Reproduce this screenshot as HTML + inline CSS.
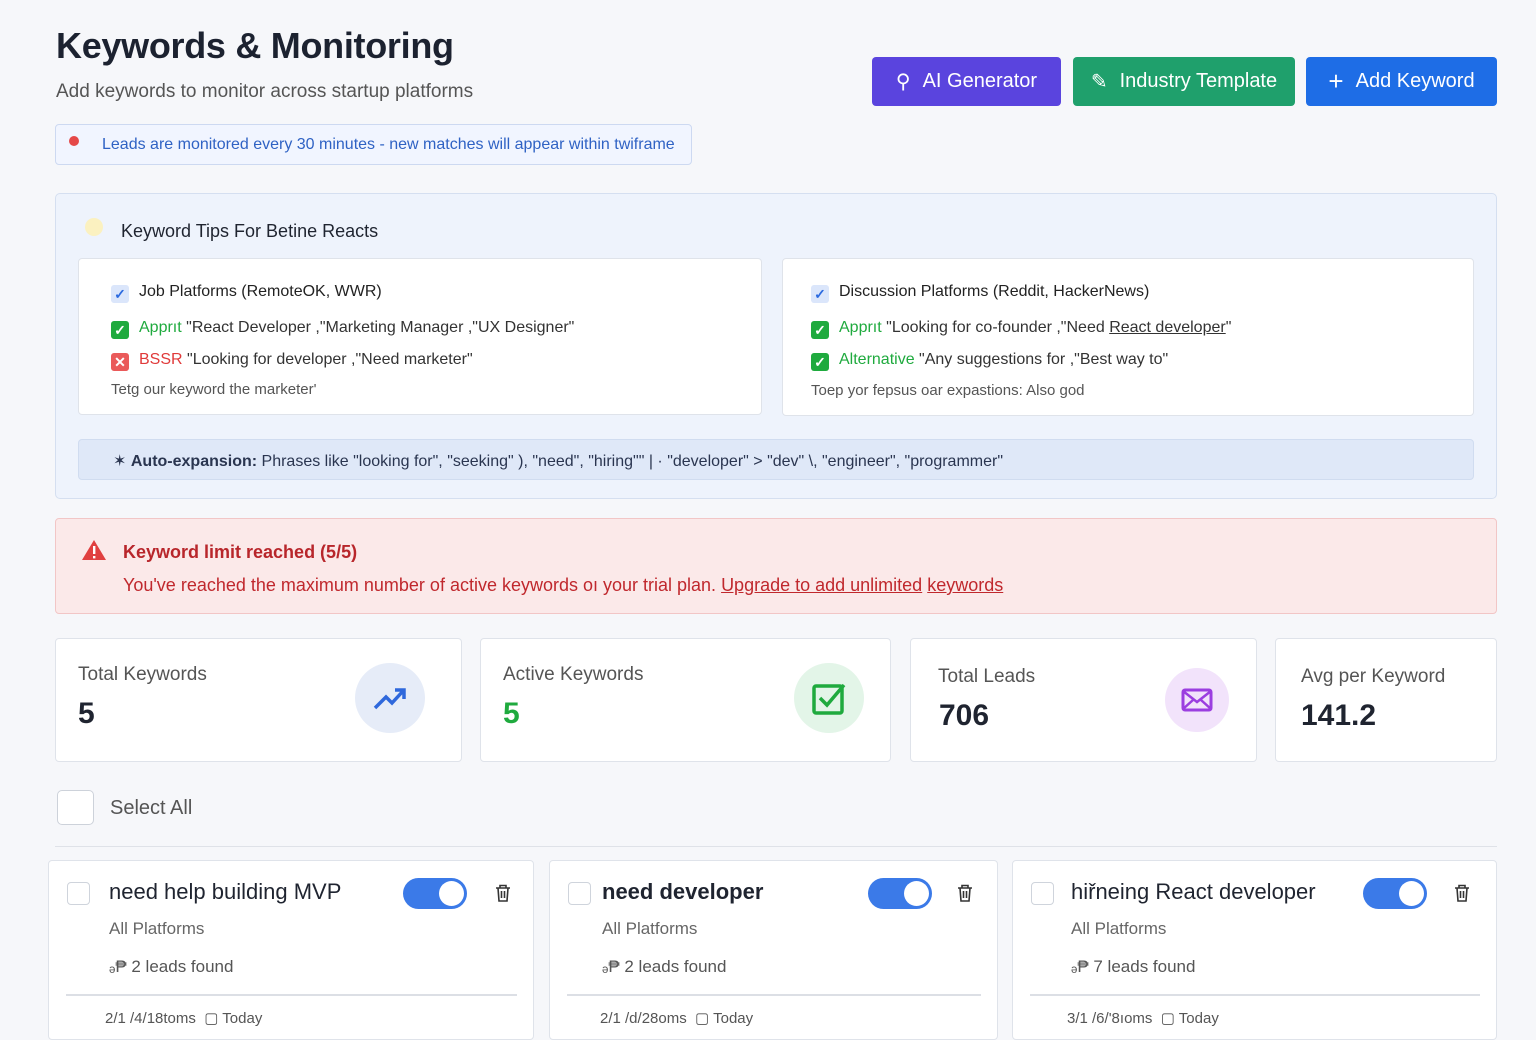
<!DOCTYPE html><html><head><style>
*{box-sizing:border-box;margin:0;padding:0}
body{width:1536px;height:1024px;overflow:hidden;background:#f6f7fa;font-family:"Liberation Sans",sans-serif;color:#1f2430;position:relative}
.a{position:absolute}
.btn{position:absolute;top:57px;height:49px;border-radius:4px;color:#fff;font-size:20px;display:flex;align-items:center;justify-content:center;gap:12px}
.card{position:absolute;background:#fff;border:1px solid #dfe3ea;border-radius:4px}
.chk{display:inline-block;width:18px;height:18px;border-radius:3px;vertical-align:-3px;margin-right:10px;color:#fff;font-size:14px;text-align:center;line-height:18px;font-weight:bold}
.row{position:absolute;left:32px;font-size:16px;color:#333}
.stat .l{position:absolute;left:22px;top:25px;font-size:19px;color:#555}
.stat .v{position:absolute;left:22px;top:58px;font-size:30px;font-weight:bold}
.circ{position:absolute;border-radius:50%;display:flex;align-items:center;justify-content:center}
.kc .cb{position:absolute;left:18px;top:21px;width:23px;height:23px;border:1.5px solid #cfd4dc;border-radius:4px}
.kc .t{position:absolute;top:18px;font-size:22px}
.kc .p{position:absolute;top:58px;font-size:17px;color:#666}
.kc .f{position:absolute;top:96px;font-size:17px;color:#555}
.kc .hr{position:absolute;left:17px;right:16px;top:133px;border-top:2px solid #dcdfe5}
.kc .d{position:absolute;top:148px;font-size:15px;color:#555}
.tg{position:absolute;top:17px;width:64px;height:31px;border-radius:16px;background:#3b7ae8}
.tg::after{content:"";position:absolute;right:3px;top:3px;width:25px;height:25px;border-radius:50%;background:#fff}
</style></head><body>
<div class="a" style="left:56px;top:25px;font-size:36px;font-weight:bold;color:#1c2230;letter-spacing:-0.3px">Keywords &amp; Monitoring</div>
<div class="a" style="left:56px;top:81px;font-size:19px;color:#555">Add keywords to monitor across startup platforms</div>
<div class="btn" style="left:872px;width:189px;background:#5a44de"><span>⚲</span>AI Generator</div>
<div class="btn" style="left:1073px;width:222px;background:#1fa06c"><span>✎</span>Industry Template</div>
<div class="btn" style="left:1306px;width:191px;background:#1e6de6"><span style="font-size:26px">+</span>Add Keyword</div>
<div class="a" style="left:55px;top:124px;width:637px;height:41px;background:#f1f5ff;border:1px solid #cdd9f1;border-radius:4px;font-size:16px;color:#2f62c4;padding:11px 0 0 46px">Leads are monitored every 30 minutes - new matches will appear within twiframe</div>
<div class="a" style="left:69px;top:136px;width:10px;height:10px;border-radius:50%;background:#e54848"></div>
<div class="a" style="left:55px;top:193px;width:1442px;height:306px;background:#eef3fc;border:1px solid #d5dff0;border-radius:5px"></div>
<div class="a" style="left:85px;top:218px;width:18px;height:18px;border-radius:50%;background:#fbf1c0"></div>
<div class="a" style="left:121px;top:221px;font-size:18px">Keyword Tips For Betine Reacts</div>
<div class="card" style="left:78px;top:258px;width:684px;height:157px">
<div class="row" style="top:24px;color:#222"><span class="chk" style="background:#dbe6fb;color:#2d6be0">✓</span>Job Platforms (RemoteOK, WWR)</div>
<div class="row" style="top:60px"><span class="chk" style="background:#1faa3e">✓</span><span style="color:#1faa3e">Apprıt</span> "React Developer ,"Marketing Manager ,"UX Designer"</div>
<div class="row" style="top:92px"><span class="chk" style="background:#ea5a5a">✕</span><span style="color:#e03a3a">BSSR</span> "Looking for developer ,"Need marketer"</div>
<div class="row" style="top:122px;font-size:15px;color:#555">Tetg our keyword the marketer'</div></div>
<div class="card" style="left:782px;top:258px;width:692px;height:158px">
<div class="row" style="left:28px;top:24px;color:#222"><span class="chk" style="background:#dbe6fb;color:#2d6be0">✓</span>Discussion Platforms (Reddit, HackerNews)</div>
<div class="row" style="left:28px;top:60px"><span class="chk" style="background:#1faa3e">✓</span><span style="color:#1faa3e">Apprıt</span> "Looking for co-founder ,"Need <u>React developer</u>"</div>
<div class="row" style="left:28px;top:92px"><span class="chk" style="background:#1faa3e">✓</span><span style="color:#1faa3e">Alternative</span> "Any suggestions for ,"Best way to"</div>
<div class="row" style="left:28px;top:123px;font-size:15px;color:#555">Toep yor fepsus oar expastions: Also god</div></div>
<div class="a" style="left:78px;top:439px;width:1396px;height:41px;background:#dfe8f8;border:1px solid #d0dcf0;border-radius:4px;font-size:16px;color:#2a3550;padding:11px 0 0 34px">✶ <b>Auto-expansion:</b> Phrases like "looking for", "seeking" ), "need", "hiring"" | · "developer" &gt; "dev" \, "engineer", "programmer"</div>
<div class="a" style="left:55px;top:518px;width:1442px;height:96px;background:#fbe9e9;border:1px solid #f2c6c6;border-radius:4px"></div>
<svg class="a" style="left:81px;top:538px" width="26" height="24"><path d="M13 2 L25 22 H1 Z" fill="#e04040"/><rect x="12" y="8" width="2.4" height="8" fill="#fff"/><rect x="12" y="18" width="2.4" height="2.4" fill="#fff"/></svg>
<div class="a" style="left:123px;top:542px;font-size:18px;font-weight:bold;color:#b8262b">Keyword limit reached (5/5)</div>
<div class="a" style="left:123px;top:575px;font-size:18px;color:#c0282d">You've reached the maximum number of active keywords oı your trial plan. <u>Upgrade to add unlimited</u> <u>keywords</u></div>
<div class="card stat" style="left:55px;top:638px;width:407px;height:124px"><div class="l">Total Keywords</div><div class="v">5</div>
<div class="circ" style="left:299px;top:24px;width:70px;height:70px;background:#e6ecf8"><svg width="34" height="24"><path d="M2 22 L13 11 L19 17 L31 4 M22 4 H31 V13" stroke="#2f68dc" stroke-width="3.5" fill="none"/></svg></div></div>
<div class="card stat" style="left:480px;top:638px;width:411px;height:124px"><div class="l">Active Keywords</div><div class="v" style="color:#1faa3e">5</div>
<div class="circ" style="left:313px;top:24px;width:70px;height:70px;background:#e3f5e8"><svg width="36" height="34"><rect x="3" y="5" width="28" height="27" rx="2" stroke="#1faa3e" stroke-width="3.5" fill="none"/><path d="M9 17 L16 24 L33 4" stroke="#1faa3e" stroke-width="3.5" fill="none"/></svg></div></div>
<div class="card stat" style="left:910px;top:638px;width:347px;height:124px"><div class="l" style="left:27px;top:27px">Total Leads</div><div class="v" style="left:28px;top:60px">706</div>
<div class="circ" style="left:254px;top:29px;width:64px;height:64px;background:#f2e3fb"><svg width="32" height="24"><rect x="2" y="2" width="28" height="20" rx="2" stroke="#9b3ee0" stroke-width="3" fill="none"/><path d="M2 3 L16 14 L30 3 M2 21 L12 12 M30 21 L20 12" stroke="#9b3ee0" stroke-width="2.5" fill="none"/></svg></div></div>
<div class="card stat" style="left:1275px;top:638px;width:222px;height:124px"><div class="l" style="left:25px;top:27px">Avg per Keyword</div><div class="v" style="left:25px;top:60px">141.2</div></div>
<div class="a" style="left:57px;top:790px;width:37px;height:35px;border:1.5px solid #cdd2da;border-radius:5px;background:#fff"></div>
<div class="a" style="left:110px;top:797px;font-size:20px;color:#555">Select All</div>
<div class="a" style="left:55px;top:846px;width:1442px;border-top:1px solid #dfe2e8"></div>
<svg width="0" height="0" style="position:absolute"><defs><g id="tr"><path d="M2 5 H16 M6 5 V2.5 H12 V5 M4 5 L5 18 H13 L14 5 M7.5 8 V15 M10.5 8 V15" stroke="#333" stroke-width="1.6" fill="none"/></g></defs></svg>
<div class="card kc" style="left:48px;top:860px;width:486px;height:180px"><div class="cb"></div><div class="t" style="left:60px">need help building MVP</div><div class="tg" style="left:354px"></div><svg class="a" style="left:445px;top:22px" width="18" height="20"><use href="#tr"/></svg><div class="p" style="left:60px">All Platforms</div><div class="f" style="left:60px">ₔ₱ 2 leads found</div><div class="hr"></div><div class="d" style="left:56px">2/1 /4/18toms &nbsp;▢ Today</div></div>
<div class="card kc" style="left:549px;top:860px;width:449px;height:180px"><div class="cb"></div><div class="t" style="left:52px;font-weight:bold">need developer</div><div class="tg" style="left:318px"></div><svg class="a" style="left:406px;top:22px" width="18" height="20"><use href="#tr"/></svg><div class="p" style="left:52px">All Platforms</div><div class="f" style="left:52px">ₔ₱ 2 leads found</div><div class="hr"></div><div class="d" style="left:50px">2/1 /d/28oms &nbsp;▢ Today</div></div>
<div class="card kc" style="left:1012px;top:860px;width:485px;height:180px"><div class="cb"></div><div class="t" style="left:58px">hiřneing React developer</div><div class="tg" style="left:350px"></div><svg class="a" style="left:440px;top:22px" width="18" height="20"><use href="#tr"/></svg><div class="p" style="left:58px">All Platforms</div><div class="f" style="left:58px">ₔ₱ 7 leads found</div><div class="hr"></div><div class="d" style="left:54px">3/1 /6/'8ıoms &nbsp;▢ Today</div></div>
</body></html>
